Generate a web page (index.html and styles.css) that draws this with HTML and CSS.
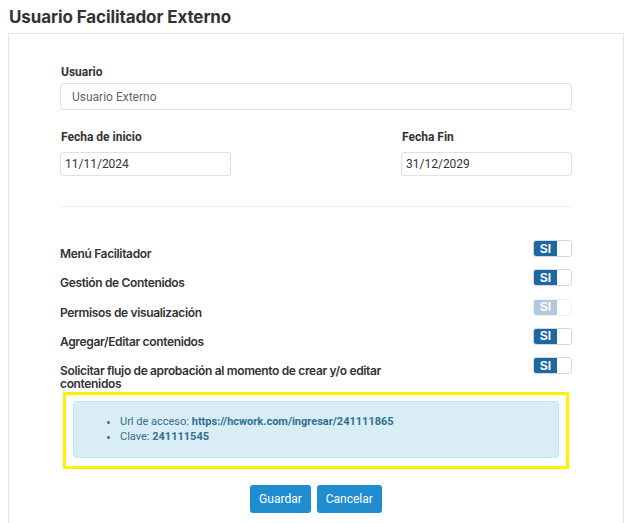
FILE: index.html
```html
<!DOCTYPE html>
<html lang="es">
<head>
<meta charset="utf-8">
<title>Usuario Facilitador Externo</title>
<link rel="stylesheet" href="styles.css">
</head>
<body>
<h1 class="title">Usuario Facilitador Externo</h1>
<div class="card">
  <div class="field">
    <label class="label">Usuario</label>
    <div class="input input-lg">Usuario Externo</div>
  </div>
  <div class="dates">
    <div class="field">
      <label class="label">Fecha de inicio</label>
      <div class="input input-sm">11/11/2024</div>
    </div>
    <div class="field">
      <label class="label">Fecha Fin</label>
      <div class="input input-sm">31/12/2029</div>
    </div>
  </div>
  <hr class="sep">
  <div class="toggles">
    <div class="trow"><span class="tlabel">Menú Facilitador</span><span class="toggle"><span class="on">SI</span><span class="off"></span></span></div>
    <div class="trow"><span class="tlabel">Gestión de Contenidos</span><span class="toggle"><span class="on">SI</span><span class="off"></span></span></div>
    <div class="trow"><span class="tlabel">Permisos de visualización</span><span class="toggle disabled"><span class="on">SI</span><span class="off"></span></span></div>
    <div class="trow"><span class="tlabel">Agregar/Editar contenidos</span><span class="toggle"><span class="on">SI</span><span class="off"></span></span></div>
    <div class="trow"><span class="tlabel">Solicitar flujo de aprobación al momento de crear y/o editar contenidos</span><span class="toggle"><span class="on">SI</span><span class="off"></span></span></div>
  </div>
  <div class="highlight">
    <div class="alert">
      <ul>
        <li>Url de acceso: <b>https://hcwork.com/ingresar/241111865</b></li>
        <li>Clave: <b>241111545</b></li>
      </ul>
    </div>
  </div>
  <div class="actions">
    <button class="btn">Guardar</button>
    <button class="btn">Cancelar</button>
  </div>
</div>
</body>
</html>
```
FILE: styles.css
```css
html, body {
  margin: 0;
  padding: 0;
  background: #fff;
}
body {
  font-family: Roboto, "Liberation Sans", sans-serif;
  color: #333;
}
.title {
  margin: 0;
  padding: 7px 0 0 9px;
  height: 26px;
  font-family: Inter, Roboto, sans-serif;
  font-size: 17px;
  line-height: 20px;
  font-weight: 700;
  color: #333;
  letter-spacing: -0.1px;
}
.card {
  margin-left: 8px;
  width: 616px;
  height: 600px;
  border: 1px solid #e4e7ea;
  padding: 31px 51px 0 51px;
  box-sizing: border-box;
}
.field {
  display: flex;
  flex-direction: column;
}
.label {
  font-size: 12px;
  line-height: 14px;
  font-weight: 700;
  color: #333;
  padding-left: 1px;
}
.input {
  margin-top: 4px;
  border: 1px solid #dde1e5;
  border-radius: 3px;
  box-sizing: border-box;
  font-size: 12px;
  color: #555;
  display: flex;
  align-items: center;
}
.input-lg {
  height: 27px;
  padding-left: 11px;
  color: #666;
}
.input-sm {
  height: 24px;
  padding-left: 4px;
  width: 171px;
  margin-top: 8px;
  color: #333;
}
.dates {
  margin-top: 20px;
  display: grid;
  grid-template-columns: 1fr 1fr 1fr;
}
.dates .field:last-child {
  grid-column: 3;
}
.sep {
  margin: 30px 0 0 0;
  border: 0;
  border-top: 1px solid #eceef0;
  height: 0;
}
.toggles {
  margin-top: 33px;
}
.trow {
  display: flex;
  justify-content: space-between;
  align-items: flex-start;
  height: 29.3px;
}
.trow:last-child {
  height: auto;
}
.tlabel {
  font-family: Inter, Roboto, sans-serif;
  font-size: 12px;
  font-weight: 600;
  line-height: 13.3px;
  color: #333;
  width: 340px;
  padding-top: 7px;
  letter-spacing: -0.35px;
}
.toggle {
  display: flex;
  width: 39px;
  height: 17px;
  border: 1px solid #d6d9dc;
  border-radius: 3px;
  box-sizing: border-box;
  overflow: hidden;
}
.toggle .on {
  width: 23px;
  background: #1d68a2;
  color: #fff;
  font-size: 12px;
  font-weight: 700;
  display: flex;
  align-items: center;
  justify-content: center;
  font-family: "Liberation Sans", Arial, sans-serif;
}
.toggle .off {
  flex: 1;
  background: #fff;
}
.toggle.disabled {
  opacity: 0.35;
}
.highlight {
  margin: 1px 3px 0 3px;
  border: 3px solid #fff200;
  padding: 6px 7px 8px 7px;
}
.alert {
  background: #d9edf7;
  border: 1px solid #bce8f1;
  border-radius: 4px;
  height: 57px;
  box-sizing: border-box;
  color: #31708f;
  font-size: 11px;
}
.alert ul {
  margin: 0;
  padding: 12px 0 0 46px;
}
.alert li {
  line-height: 15.5px;
}
.alert b {
  font-weight: 700;
}
.actions {
  margin-top: 16px;
  display: flex;
  justify-content: center;
  gap: 6px;
}
.btn {
  height: 28px;
  border: 0;
  border-radius: 3px;
  background: #1f8dd0;
  color: #fff;
  font-family: Roboto, sans-serif;
  font-size: 12px;
  padding: 0 9px;
}
```
